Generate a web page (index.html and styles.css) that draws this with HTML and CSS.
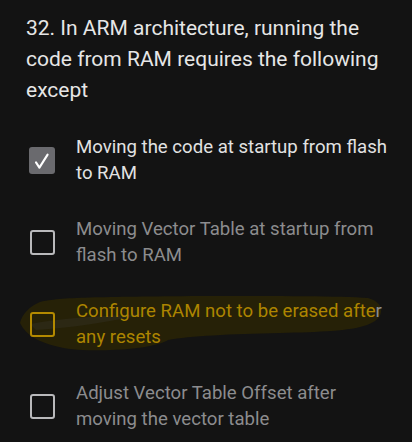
FILE: index.html
```html
<!DOCTYPE html>
<html lang="en">
<head>
<meta charset="utf-8">
<title>Question 32</title>
<link rel="stylesheet" href="styles.css">
</head>
<body>
<main class="question">
  <h1 class="title">32. In ARM architecture, running the code from RAM requires the following except</h1>
  <ul class="options">
    <li class="option option--checked">
      <span class="box box--checked"><svg viewBox="0 0 24 24" width="24" height="24"><path d="M6 14.4 L9.4 19.6 L17.6 6.6" fill="none" stroke="#fff" stroke-width="2.1" stroke-linecap="round" stroke-linejoin="round"/></svg></span>
      <span class="label">Moving the code at startup from flash to RAM</span>
    </li>
    <li class="option">
      <span class="box"></span>
      <span class="label">Moving Vector Table at startup from flash to RAM</span>
    </li>
    <li class="option option--marked">
      <svg class="marker" viewBox="0 0 412 442" width="412" height="442" aria-hidden="true"><path d="M20 323 C22 314 30 306 40 302 C60 297 100 297 200 296 C280 296 340 296 368 298 C378 301 382 306 381 312 C380 318 375 322 367 325 C350 331 320 332 280 333 C230 334 190 336 168 340 C160 345 140 349 110 350 C85 351 70 350 55 346 C40 342 26 336 20 323 Z" fill="#262107"/><path d="M30 324 C60 318 100 316 146 314 C110 322 70 328 36 330 Z" fill="#2c2814"/></svg>
      <span class="box box--marked"></span>
      <span class="label label--marked">Configure RAM not to be erased afte<span class="plain">r</span> any resets</span>
    </li>
    <li class="option">
      <span class="box"></span>
      <span class="label">Adjust Vector Table Offset after moving the vector table</span>
    </li>
  </ul>
</main>
</body>
</html>
```

FILE: styles.css
```css
html, body {
  margin: 0;
  padding: 0;
  background: #131313;
}
body {
  width: 412px;
  height: 442px;
  overflow: hidden;
  font-family: Roboto, "Noto Sans", sans-serif;
}
.question {
  padding: 13px 20px 0 26px;
}
.title {
  margin: 0;
  font-size: 21px;
  line-height: 31px;
  font-weight: 400;
  color: #e6e6e6;
}
.options {
  list-style: none;
  margin: 28px 0 0 0;
  padding: 0;
  display: flex;
  flex-direction: column;
  gap: 30px;
}
.option {
  display: flex;
  align-items: center;
  gap: 21px;
}
.box {
  flex: 0 0 auto;
  box-sizing: border-box;
  width: 25px;
  height: 25px;
  margin-left: 4px;
  border: 2.5px solid #b9b9bb;
  border-radius: 3px;
  display: flex;
  align-items: center;
  justify-content: center;
  position: relative;
}
.box--checked {
  width: 26px;
  height: 27px;
  margin-left: 3px;
  border: none;
  background: #6a6a6e;
}
.box--marked {
  border-color: #b48a00;
}
.label {
  width: 318px;
  font-size: 18.6px;
  line-height: 26px;
  color: #8c8c8e;
  position: relative;
}
.option--checked .label {
  color: #e2e2e2;
}
.label--marked {
  color: #ad8500;
}
.plain {
  color: #8c8c8e;
}
.marker {
  position: absolute;
  left: 0;
  top: 0;
  pointer-events: none;
}
```
